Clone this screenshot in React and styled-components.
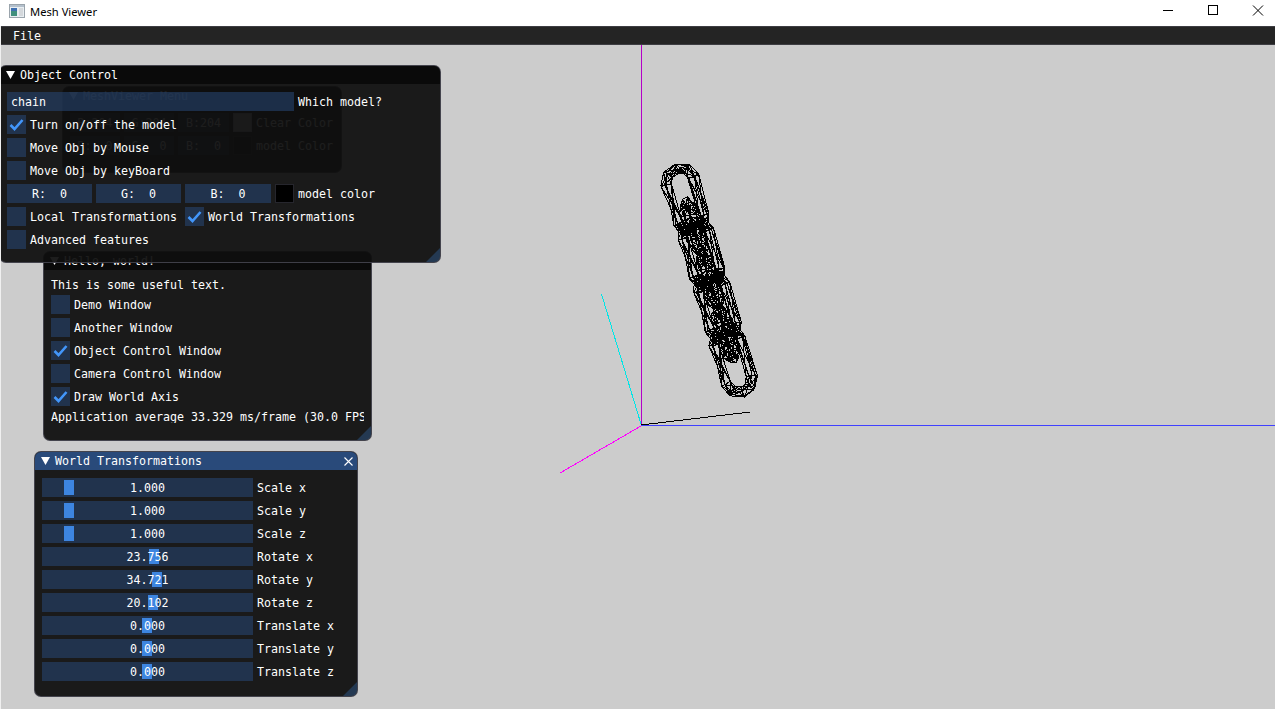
import React from 'react';
import styled, { createGlobalStyle } from 'styled-components';

const GlobalStyle = createGlobalStyle`
  html, body, #root {
    margin: 0;
    height: 100%;
    overflow: hidden;
  }
  body {
    background: #ffffff;
    font-family: "DejaVu Sans Mono", "Liberation Mono", monospace;
    font-size: 11.63px;
    color: #ffffff;
  }
`;

const Page = styled.div`
  display: flex;
  flex-direction: column;
  width: 1275px;
  height: 709px;
  box-sizing: border-box;
  border-left: 1px solid #f0f0f0;
`;

// native title bar
const TitleBar = styled.header`
  display: flex;
  align-items: center;
  height: 26px;
  box-sizing: border-box;
  padding-bottom: 4px;
  flex-shrink: 0;
  background: #ffffff;
  margin-left: -1px;
  color: #000000;
  font-family: "Noto Sans", "Open Sans", sans-serif;
  font-size: 11.2px;
`;

const AppIcon = styled.svg`
  width: 16px;
  height: 16px;
  margin-left: 9px;
  margin-right: 5px;
`;

const AppName = styled.span`
  flex: 1;
`;

const WinButton = styled.button`
  display: flex;
  align-items: center;
  justify-content: center;
  width: 45px;
  height: 20px;
  padding: 0;
  border: 0;
  flex-shrink: 0;
  background: transparent;

  &:last-child {
    margin-right: -5px;
  }

  svg {
    width: 12px;
    height: 12px;
  }
`;

const MenuBar = styled.nav`
  display: flex;
  align-items: center;
  height: 17px;
  flex-shrink: 0;
  padding-left: 12px;
  background: #242424;
  border-top: 1px solid #3d3d42;
  border-bottom: 1px solid #3d3d42;
`;

// GL viewport, ImGui windows float on top of it
const Canvas = styled.main`
  position: relative;
  flex: 1;
  background: #cccccc;
  overflow: hidden;
`;

const Scene = styled.svg`
  position: absolute;
  left: 0;
  top: 0;
  width: 1274px;
  height: 664px;
`;

const Win = styled.section`
  position: absolute;
  left: ${({ $x }) => $x - 1}px;
  top: ${({ $y }) => $y - 45}px;
  width: ${({ $w }) => $w}px;
  height: ${({ $h }) => $h}px;
  box-sizing: border-box;
  border: 1px solid rgba(110, 110, 128, 0.5);
  border-radius: 7px;
  background: rgba(15, 15, 15, 0.94);
  overflow: hidden;
`;

const WinTitle = styled.div`
  display: flex;
  align-items: center;
  gap: 5px;
  height: 18px;
  padding: 0 6px;
  background: ${({ $active }) => ($active ? '#294a7a' : '#0a0a0a')};
  white-space: nowrap;
`;

const Arrow = styled.i`
  display: block;
  width: 9px;
  height: 8px;
  background: #ffffff;
  clip-path: polygon(0 0, 100% 0, 50% 100%);
`;

const CloseMark = styled.svg`
  width: 9px;
  height: 9px;
  margin-left: auto;
  margin-right: -2px;
`;

const WinBody = styled.div`
  display: flex;
  flex-direction: column;
  gap: 4px;
  padding: 8px 7px;
`;

const Row = styled.div`
  display: flex;
  align-items: center;
  gap: ${({ $gap }) => $gap || 4}px;
  height: 19px;
  white-space: pre;
`;

const TextLine = styled.div`
  height: 13px;
  line-height: 15px;
  white-space: nowrap;
  overflow: hidden;
  max-width: ${({ $max }) => ($max ? `${$max}px` : 'none')};
`;

const Frame = styled.div`
  position: relative;
  display: flex;
  align-items: center;
  justify-content: ${({ $left }) => ($left ? 'flex-start' : 'center')};
  width: ${({ $w }) => $w}px;
  height: 19px;
  padding: ${({ $left }) => ($left ? '0 4px' : '0')};
  box-sizing: border-box;
  flex-shrink: 0;
  background: rgba(41, 74, 122, 0.54);
`;

const FrameValue = styled.span`
  position: relative;
`;

const Grab = styled.i`
  position: absolute;
  top: 2px;
  bottom: 2px;
  width: 10px;
  background: #3d85e0;
`;

const CheckBox = styled.div`
  display: flex;
  align-items: center;
  justify-content: center;
  width: 19px;
  height: 19px;
  flex-shrink: 0;
  background: rgba(41, 74, 122, 0.54);

  svg {
    width: 19px;
    height: 19px;
  }
`;

const Swatch = styled.div`
  width: 19px;
  height: 19px;
  box-sizing: border-box;
  flex-shrink: 0;
  background: ${({ $color }) => $color};
  border: 1px solid rgba(110, 110, 128, 0.35);
`;

const ResizeGrip = styled.i`
  position: absolute;
  right: 0;
  bottom: 0;
  width: 14px;
  height: 14px;
  background: rgba(66, 150, 250, 0.25);
  clip-path: polygon(100% 0, 100% 100%, 0 100%);
`;

// chain model, low poly like the loaded mesh
// even links face the camera, odd ones sit edge-on inside the joints
function buildChain() {
  const dir = [0.284, 0.959];
  const nrm = [0.959, -0.284];
  const start = [685.6, 200];
  const pitch = 27.9;
  const ringW = 13.5;
  const tube = 5.5;
  const endSegs = 4;
  const sides = 5;
  const d = [];
  let seed = 7;
  const jitter = () => {
    seed = (seed * 16807) % 2147483647;
    return (seed / 2147483647 - 0.5) * 1.8;
  };

  for (let link = 0; link < 7; link++) {
    const even = link % 2 === 0;
    const theta = even ? 0.1 : 1.25;
    const halfStraight = even ? 20 : 12;
    const cx = start[0] + dir[0] * pitch * link;
    const cy = start[1] + dir[1] * pitch * link;

    // stadium outline, only the round ends get subdivided
    const path = [];
    for (let a = 0; a <= endSegs; a++) {
      const t = Math.PI + (a / endSegs) * Math.PI;
      path.push([-halfStraight + Math.sin(t) * ringW, Math.cos(t) * ringW]);
    }
    for (let a = 0; a <= endSegs; a++) {
      const t = (a / endSegs) * Math.PI;
      path.push([halfStraight + Math.sin(t) * ringW, Math.cos(t) * ringW]);
    }

    const pts = path.map(([u, v], i) => {
      const next = path[(i + 1) % path.length];
      const prev = path[(i - 1 + path.length) % path.length];
      let tu = next[0] - prev[0];
      let tv = next[1] - prev[1];
      const len = Math.hypot(tu, tv) || 1;
      tu /= len;
      tv /= len;
      const ring = [];
      for (let s = 0; s < sides; s++) {
        const q = (s / sides) * Math.PI * 2 + i * 0.3;
        const off = Math.cos(q) * tube;
        const lu = u - tv * off;
        const lv = v + tu * off;
        const lw = Math.sin(q) * tube;
        const vv = lv * Math.cos(theta) - lw * Math.sin(theta);
        ring.push([
          (cx + dir[0] * lu + nrm[0] * vv + jitter()).toFixed(1),
          (cy + dir[1] * lu + nrm[1] * vv + jitter()).toFixed(1),
        ]);
      }
      return ring;
    });

    pts.forEach((ring, i) => {
      const nextRing = pts[(i + 1) % pts.length];
      ring.forEach((p, s) => {
        const n = ring[(s + 1) % sides];
        const diag = nextRing[(s + 1) % sides];
        d.push(`M${p[0]} ${p[1]}L${n[0]} ${n[1]}`);
        d.push(`M${p[0]} ${p[1]}L${nextRing[s][0]} ${nextRing[s][1]}`);
        d.push(`M${p[0]} ${p[1]}L${diag[0]} ${diag[1]}`);
      });
    });
  }
  return d.join('');
}

const chainPath = buildChain();

const sliders = [
  { value: '1.000', label: 'Scale x', grab: 22 },
  { value: '1.000', label: 'Scale y', grab: 22 },
  { value: '1.000', label: 'Scale z', grab: 22 },
  { value: '23.756', label: 'Rotate x', grab: 107 },
  { value: '34.721', label: 'Rotate y', grab: 110 },
  { value: '20.102', label: 'Rotate z', grab: 106 },
  { value: '0.000', label: 'Translate x', grab: 100 },
  { value: '0.000', label: 'Translate y', grab: 100 },
  { value: '0.000', label: 'Translate z', grab: 100 },
];

function Check({ on, children }) {
  return (
    <Row>
      <CheckBox>
        {on && (
          <svg viewBox="0 0 19 19">
            <path d="M3.5 10 L7.5 14 L15.5 5" fill="none" stroke="#4296fa" strokeWidth="2.6" />
          </svg>
        )}
      </CheckBox>
      {children}
    </Row>
  );
}

function Window({ title, active, closable, children, grip = true, ...rest }) {
  return (
    <Win {...rest}>
      <WinTitle $active={active}>
        <Arrow />
        <span>{title}</span>
        {closable && (
          <CloseMark viewBox="0 0 9 9">
            <path d="M0.5 0.5 L8.5 8.5 M8.5 0.5 L0.5 8.5" stroke="#ffffff" strokeWidth="1.1" />
          </CloseMark>
        )}
      </WinTitle>
      <WinBody>{children}</WinBody>
      {grip && <ResizeGrip />}
    </Win>
  );
}

export default function App() {
  return (
    <>
      <GlobalStyle />
      <Page>
        <TitleBar>
          <AppIcon viewBox="0 0 16 16">
            <rect x="0.5" y="1.5" width="15" height="13" fill="#e8eef2" stroke="#9aa4ac" />
            <rect x="1" y="2" width="14" height="2" fill="#b4c0cc" />
            <rect x="2" y="5" width="6" height="8" fill="#3f8f7c" />
            <rect x="2" y="5" width="6" height="3" fill="#3d6fb0" />
            <rect x="10" y="5" width="4" height="8" fill="#d4d8dc" />
          </AppIcon>
          <AppName>Mesh Viewer</AppName>
          <WinButton aria-label="minimize">
            <svg viewBox="0 0 12 12"><path d="M1 5.5 H11" stroke="#000" /></svg>
          </WinButton>
          <WinButton aria-label="maximize">
            <svg viewBox="0 0 12 12"><rect x="1.5" y="0.5" width="9" height="9" fill="none" stroke="#000" /></svg>
          </WinButton>
          <WinButton aria-label="close">
            <svg viewBox="0 0 12 12"><path d="M1 0.5 L11 10.5 M11 0.5 L1 10.5" stroke="#000" /></svg>
          </WinButton>
        </TitleBar>
        <MenuBar>File</MenuBar>
        <Canvas>
          <Scene viewBox="1 45 1274 664" shapeRendering="crispEdges">
            <path d="M641.5 45 V425" stroke="#b400c8" fill="none" />
            <path d="M641 425.5 H1275" stroke="#4040ff" fill="none" />
            <path d="M641 424 L601.5 294" stroke="#00e6e6" fill="none" />
            <path d="M641 426 L560 473" stroke="#ff00ff" fill="none" />
            <path d="M641 425 L750 412" stroke="#000000" fill="none" />
            <path d={chainPath} stroke="#000000" fill="none" />
          </Scene>

          <Window title="MeshViewer Menu" $x={62} $y={86} $w={280} $h={87} grip={false}>
            <Row>
              <Frame $w={50}>R:204</Frame>
              <Frame $w={50}>G:204</Frame>
              <Frame $w={51}>B:204</Frame>
              <Swatch $color="#cccccc" />
              <span>Clear Color</span>
            </Row>
            <Row>
              <Frame $w={50}>R:  0</Frame>
              <Frame $w={50}>G:  0</Frame>
              <Frame $w={51}>B:  0</Frame>
              <Swatch $color="#000000" />
              <span>model Color</span>
            </Row>
          </Window>

          <Window title="Hello, world!" $x={43} $y={251} $w={329} $h={190}>
            <TextLine>This is some useful text.</TextLine>
            <Check>Demo Window</Check>
            <Check>Another Window</Check>
            <Check on>Object Control Window</Check>
            <Check>Camera Control Window</Check>
            <Check on>Draw World Axis</Check>
            <TextLine $max={317}>Application average 33.329 ms/frame (30.0 FPS)</TextLine>
          </Window>

          <Window title="Object Control" $x={-1} $y={65} $w={442} $h={198}>
            <Row>
              <Frame $w={287} $left>chain</Frame>
              <span>Which model?</span>
            </Row>
            <Check on>Turn on/off the model</Check>
            <Check>Move Obj by Mouse</Check>
            <Check>Move Obj by keyBoard</Check>
            <Row>
              <Frame $w={85}>R:  0</Frame>
              <Frame $w={85}>G:  0</Frame>
              <Frame $w={86}>B:  0</Frame>
              <Swatch $color="#000000" />
              <span>model color</span>
            </Row>
            <Row $gap={8}>
              <Check>Local Transformations</Check>
              <Check on>World Transformations</Check>
            </Row>
            <Check>Advanced features</Check>
          </Window>

          <Window title="World Transformations" active closable $x={34} $y={451} $w={324} $h={246}>
            {sliders.map((s) => (
              <Row key={s.label}>
                <Frame $w={211}>
                  <Grab style={{ left: s.grab }} />
                  <FrameValue>{s.value}</FrameValue>
                </Frame>
                <span>{s.label}</span>
              </Row>
            ))}
          </Window>
        </Canvas>
      </Page>
    </>
  );
}
